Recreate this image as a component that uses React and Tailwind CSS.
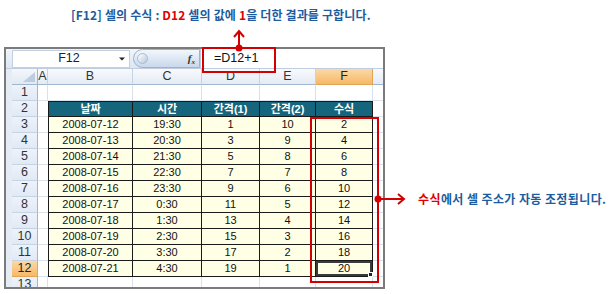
const rows = [
  ["2008-07-12", "19:30", 1, 10, 2],
  ["2008-07-13", "20:30", 3, 9, 4],
  ["2008-07-14", "21:30", 5, 8, 6],
  ["2008-07-15", "22:30", 7, 7, 8],
  ["2008-07-16", "23:30", 9, 6, 10],
  ["2008-07-17", "0:30", 11, 5, 12],
  ["2008-07-18", "1:30", 13, 4, 14],
  ["2008-07-19", "2:30", 15, 3, 16],
  ["2008-07-20", "3:30", 17, 2, 18],
  ["2008-07-21", "4:30", 19, 1, 20],
];

const heads = ["날짜", "시간", "간격(1)", "간격(2)", "수식"];
const widths = ["w-[85px]", "w-[69px]", "w-[58px]", "w-[56px]", "w-[57px]"];
const letters = ["B", "C", "D", "E", "F"];

const RowHead = ({ n, active }) => (
  <div
    className={
      "w-[26px] h-full flex items-center justify-center border-r border-b text-[12.5px] " +
      (active
        ? "bg-gradient-to-b from-[#fbd9a6] to-[#f6b867] border-[#e1a556] text-[#222]"
        : "bg-gradient-to-b from-[#eef3fa] to-[#e0e9f5] border-r-[#9eb6ce] border-b-[#c5d3e3] text-[#333]")
    }
  >
    {n}
  </div>
);

const Blank = ({ w }) => (
  <div className={w + " h-full border-r border-b border-[#dae1eb] bg-white"}></div>
);

const App = () => {
  return (
    <div
      className="w-[614px] h-[294px] bg-white relative overflow-hidden"
      style={{ fontFamily: '"Noto Sans CJK KR", sans-serif' }}
    >
      <div className="h-[47px] pl-[71px] pt-[6px] text-[12px] font-bold leading-[18px] text-[#1d5c9e] tracking-[0.15px]">
        [F12] 셀의 수식 : <span className="text-[#e00000]">D12</span> 셀의 값에{" "}
        <span className="text-[#e00000]">1</span>을 더한 결과를 구합니다.
      </div>

      <div className="flex">
        <div
          className="ml-[4px] w-[381px] h-[242px] border-2 border-[#7b7b7b] bg-[#e6ecf4] flex flex-col overflow-hidden"
          style={{ fontFamily: '"Liberation Sans", "Noto Sans CJK KR", sans-serif' }}
        >
          {/* formula bar */}
          <div className="h-[22px] flex items-center pl-[6px] bg-gradient-to-b from-[#f1f5fb] to-[#dde6f2] border-b border-[#c0cde0]">
            <div className="w-[118px] h-[18px] bg-white border border-[#c3d0e2] flex items-center">
              <span className="flex-1 text-center pl-[8px] text-[12.5px] text-[#222]">F12</span>
              <svg width="10" height="6" viewBox="0 0 10 6" className="mr-[2px]">
                <path d="M2 1.5h6L5 4.5z" fill="#222" />
              </svg>
            </div>
            <div className="ml-[3px] w-[67px] h-[19px] rounded-l-full border border-[#9fb3cc] bg-gradient-to-b from-[#f3f7fc] to-[#c9d8eb] flex items-center justify-between pl-[3px] pr-[4px]">
              <div className="w-[11px] h-[11px] rounded-full bg-gradient-to-br from-white to-[#b7c8de] border border-[#a8bad2]"></div>
              <span className="text-[11px] italic font-bold text-[#333]" style={{ fontFamily: '"Liberation Serif", serif' }}>
                f<sub className="text-[7px]">x</sub>
              </span>
            </div>
            <div className="flex-1 h-full bg-white border-l border-[#c0cde0] flex items-center pl-[13px] text-[12.5px] text-[#111]">
              =D12+1
            </div>
          </div>

          {/* column headers */}
          <div className="h-[16px] flex pl-[6px] shrink-0">
            <div className="w-[26px] h-full bg-gradient-to-b from-[#f4f7fb] to-[#e2e9f2] border-r border-b border-[#9eb6ce] relative">
              <svg width="12" height="10" viewBox="0 0 12 10" className="absolute right-[2px] bottom-[2px]">
                <path d="M12 0V10H0z" fill="#bccde2" />
              </svg>
            </div>
            <div className="w-[10px] h-full flex items-center justify-center text-[12.5px] text-[#333] bg-gradient-to-b from-[#f8fafd] to-[#e4ebf4] border-r border-b border-r-[#c5d3e3] border-b-[#9eb6ce]">
              A
            </div>
            {letters.map((l, i) => (
              <div
                key={l}
                className={
                  widths[i] +
                  " h-full flex items-center justify-center text-[12.5px] border-r border-b " +
                  (l === "F"
                    ? "bg-gradient-to-b from-[#fbd9a6] to-[#f6b867] border-[#e1a556] text-[#222]"
                    : "bg-gradient-to-b from-[#f8fafd] to-[#e4ebf4] border-r-[#c5d3e3] border-b-[#9eb6ce] text-[#333]")
                }
              >
                {l}
              </div>
            ))}
            <div className="flex-1 h-full bg-gradient-to-b from-[#f8fafd] to-[#e4ebf4] border-b border-[#9eb6ce]"></div>
          </div>

          {/* row 1 */}
          <div className="h-[16px] flex pl-[6px] shrink-0">
            <RowHead n={1} />
            <Blank w="w-[10px]" />
            {widths.map((w, i) => (
              <Blank key={i} w={w} />
            ))}
            <div className="flex-1 h-full bg-white border-b border-[#dae1eb]"></div>
          </div>

          {/* row 2 header */}
          <div className="h-[16px] flex pl-[6px] shrink-0">
            <RowHead n={2} />
            <div className="w-[10px] h-full bg-white border-b border-[#dae1eb]"></div>
            {heads.map((h, i) => (
              <div
                key={h}
                className={
                  widths[i] +
                  " h-full flex items-center justify-center bg-[#15667d] text-white font-bold text-[11px] border-t border-b border-r border-[#1a1a1a] " +
                  (i === 0 ? "border-l" : "")
                }
              >
                {h}
              </div>
            ))}
            <div className="flex-1 h-full bg-white border-b border-[#dae1eb]"></div>
          </div>

          {rows.map((r, ri) => (
            <div key={ri} className="h-[16px] flex pl-[6px] shrink-0">
              <RowHead n={ri + 3} active={ri === 9} />
              <div className="w-[10px] h-full bg-white border-b border-[#dae1eb]"></div>
              {r.map((v, i) => {
                const sel = ri === 9 && i === 4;
                return (
                  <div
                    key={i}
                    className={
                      widths[i] +
                      " h-full flex items-center justify-center bg-[#ffffe6] text-[11px] text-[#111] border-b border-r border-[#1a1a1a] relative " +
                      (i === 0 ? "border-l" : "")
                    }
                  >
                    {sel && (
                      <div className="absolute inset-[0px] border-2 border-[#3b3b3b]">
                        <div className="absolute right-[-3px] bottom-[-3px] w-[5px] h-[5px] bg-[#222] border border-white"></div>
                      </div>
                    )}
                    <span className="relative">{v}</span>
                  </div>
                );
              })}
              <div className="flex-1 h-full bg-white border-b border-[#dae1eb]"></div>
            </div>
          ))}

          {/* row 13 */}
          <div className="h-[16px] flex pl-[6px] shrink-0">
            <RowHead n={13} />
            <Blank w="w-[10px]" />
            {widths.map((w, i) => (
              <Blank key={i} w={w} />
            ))}
            <div className="flex-1 h-full bg-white"></div>
          </div>
        </div>

        <div className="ml-[33px] pt-[143px] text-[12px] font-bold leading-[18px] text-[#1d5c9e] whitespace-nowrap tracking-[0.4px]">
          <span className="text-[#e00000]">수식</span>에서 셀 주소가 자동 조정됩니다.
        </div>
      </div>

      {/* callouts */}
      <svg className="absolute left-0 top-0 pointer-events-none" width="614" height="294" viewBox="0 0 614 294">
        <rect x="203" y="48" width="72" height="24" fill="none" stroke="#d20000" strokeWidth="2" />
        <line x1="239" y1="48" x2="239" y2="31" stroke="#d20000" strokeWidth="2" />
        <path d="M234 37L239 31L244 37" fill="none" stroke="#d20000" strokeWidth="2" />
        <circle cx="239" cy="48" r="3.5" fill="#d20000" />

        <rect x="311" y="118" width="67" height="164" fill="none" stroke="#d20000" strokeWidth="2" />
        <line x1="378" y1="199" x2="404" y2="199" stroke="#d20000" strokeWidth="2" />
        <path d="M398 194L404 199L398 204" fill="none" stroke="#d20000" strokeWidth="2" />
        <circle cx="378" cy="199" r="3.5" fill="#d20000" />
      </svg>
    </div>
  );
};

export default App;
